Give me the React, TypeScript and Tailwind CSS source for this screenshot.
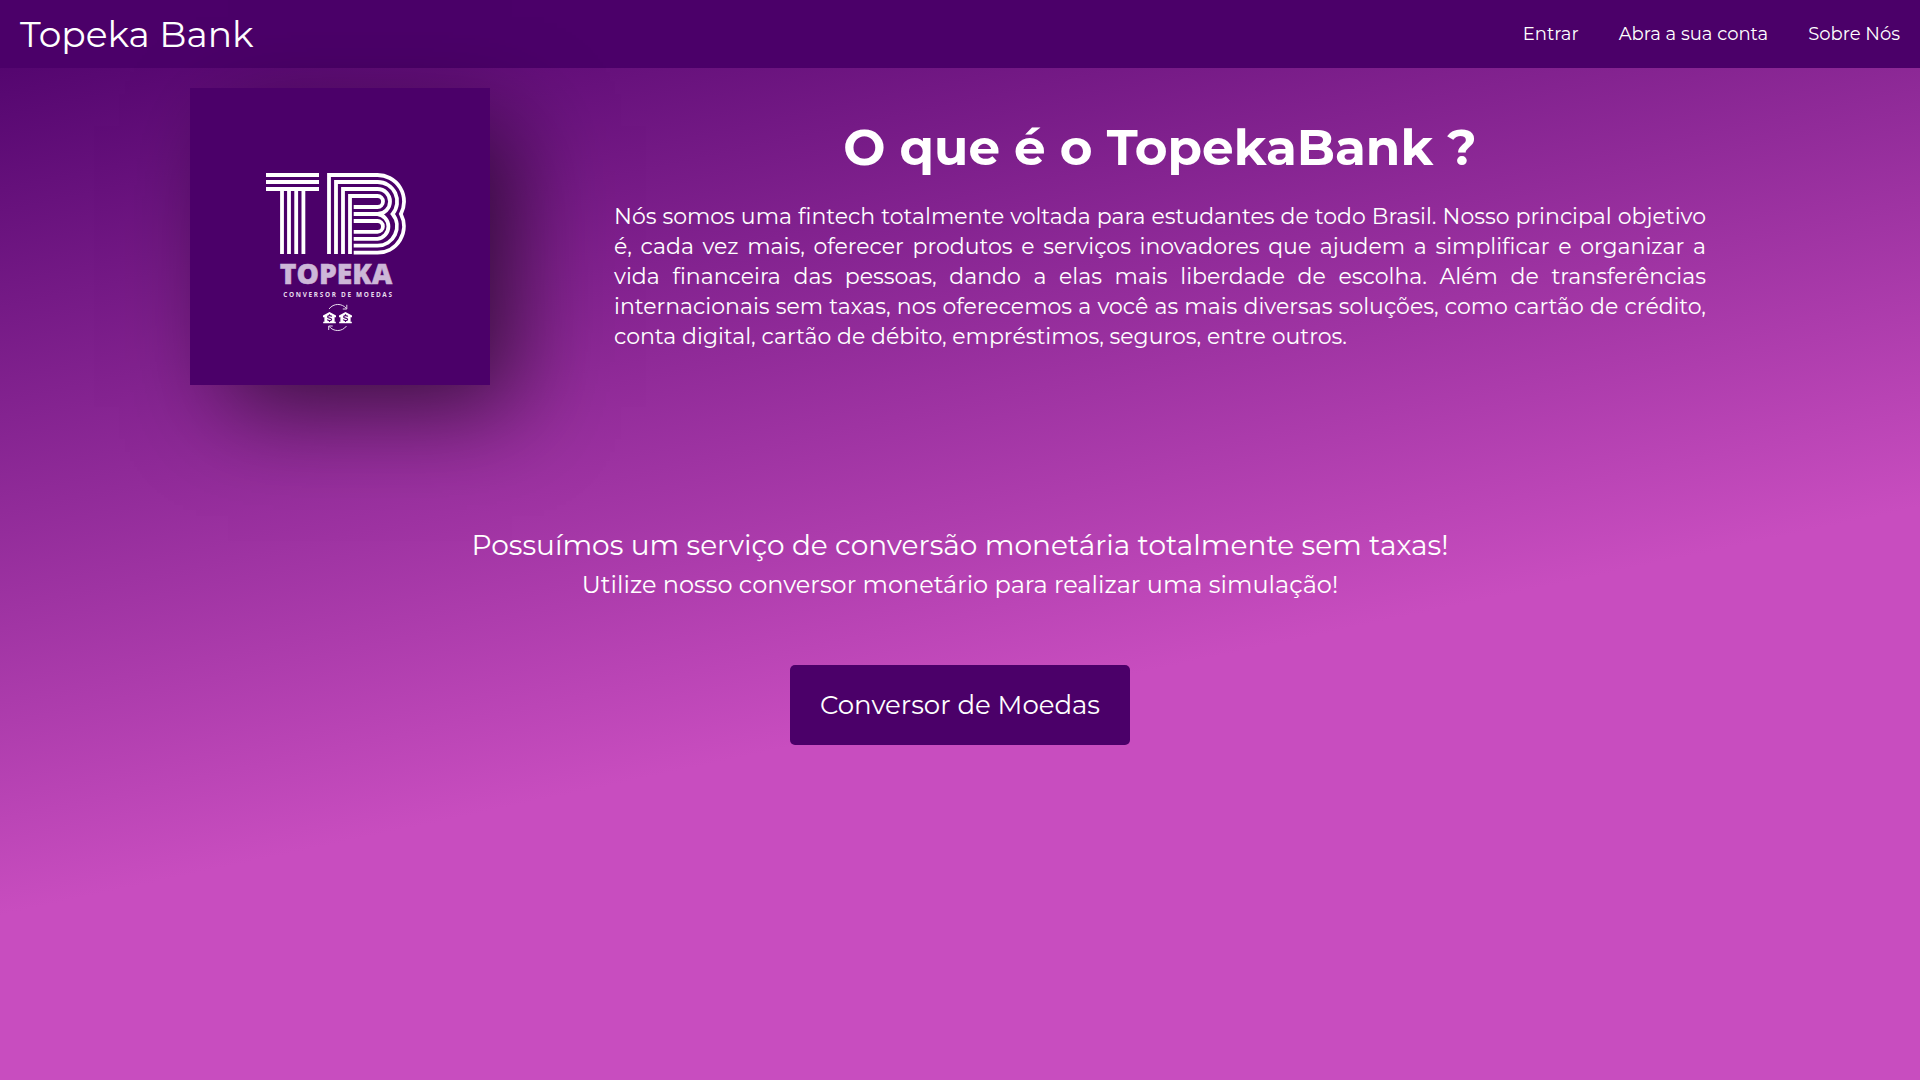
import React from "react";

function House({ x }: { x: number }) {
  return (
    <g transform={`translate(${x} 224)`}>
      <path d="M6.5 0 13 3.4V5.2H11.6V9.8H12.8V11.2H.2V9.8H1.4V5.2H0V3.4Z" fill="#fff" />
      <path d="M8.7 4.6C8.3 3.2 4.6 3.1 4.6 4.9 4.6 6.6 8.6 5.6 8.6 7.4 8.6 9 4.9 9 4.3 7.5M6.5 2.2V3.6M6.5 8.6V9.9" fill="none" stroke="#4b0069" strokeWidth="1.2" />
    </g>
  );
}

function Logo() {
  return (
    <svg viewBox="0 0 300 297" className="h-full w-full" role="img" aria-label="Topeka">
      <g fill="none" stroke="#fff" strokeWidth="3.8">
        <path d="M76 87H129M76 94H129M76 101H129" />
        <path d="M92 101V166M99 101V166M106.2 101V166M113.4 101V166" />
        <path d="M139 166V87H187.5A26.5 26.5 0 0 1 210.9 126A26.5 26.5 0 0 1 187.5 164.7H163.7" />
        <path d="M146 166V94H187.5A19.5 19.5 0 0 1 202.6 126A19.5 19.5 0 0 1 187.5 157.7H163.7" />
        <path d="M153 166V101H187.5A12.5 12.5 0 0 1 187.5 126A12.5 12.5 0 0 1 187.5 150.8H163.7M163.7 126H190" />
        <path d="M160 166V108H187.5A5.5 5.5 0 0 1 187.5 119H163.7M163.7 133H187.5A5.4 5.4 0 0 1 187.5 143.8H163.7" />
      </g>
      <text x="89.8" y="195.6" textLength="112.4" lengthAdjust="spacingAndGlyphs" fill="#cdb7d8" stroke="#cdb7d8" strokeWidth="0.5" className="font-['Open_Sans'] text-[28.6px] font-extrabold">TOPEKA</text>
      <text x="93.2" y="208.7" textLength="108.8" fill="#e6dcec" className="font-['Open_Sans'] text-[6.4px] font-bold">CONVERSOR DE MOEDAS</text>
      <House x={133} />
      <House x={149} />
      <g fill="none" stroke="#e6dcec" strokeWidth="1">
        <path d="M139 221C143.5 215 152 215 156.5 220.6M156.8 216.8V221H152.8" />
        <path d="M156.5 238C152 244 143.5 244 139 238.3M138.7 242V238H142.7" />
      </g>
    </svg>
  );
}

export default function App() {
  return (
    <div className="min-h-screen bg-[linear-gradient(168deg,#4b0069_0%,#c84dbf_61.5%)] font-[Montserrat,Inter,sans-serif] text-white">
      <nav className="flex h-[68px] items-center justify-between bg-[#4b0069] px-5">
        <span className="text-[36px]">Topeka Bank</span>
        <ul className="flex gap-10 text-[18px]">
          <li>Entrar</li>
          <li>Abra a sua conta</li>
          <li>Sobre Nós</li>
        </ul>
      </nav>
      <main>
        <section className="flex pt-5 pl-[190px]">
          <div className="h-[297px] w-[300px] shrink-0 bg-[#4b0069] shadow-[30px_30px_90px_-8px_rgba(0,0,0,0.58)]">
            <Logo />
          </div>
          <div className="ml-[124px] w-[1092px] pt-[29px]">
            <h1 className="text-center text-[50px] leading-[62px] font-bold">O que é o TopekaBank ?</h1>
            <p className="mt-[23px] text-justify text-[22px] leading-[30px]">
              Nós somos uma fintech totalmente voltada para estudantes de todo Brasil. Nosso principal objetivo é, cada vez mais, oferecer produtos e serviços inovadores que ajudem a simplificar e organizar a vida financeira das pessoas, dando a elas mais liberdade de escolha. Além de transferências internacionais sem taxas, nos oferecemos a você as mais diversas soluções, como cartão de crédito, conta digital, cartão de débito, empréstimos, seguros, entre outros.
            </p>
          </div>
        </section>
        <section className="mt-[142px] flex flex-col items-center">
          <h2 className="text-[28px] leading-[36px]">Possuímos um serviço de conversão monetária totalmente sem taxas!</h2>
          <h3 className="mt-1 text-[24px] leading-[36px]">Utilize nosso conversor monetário para realizar uma simulação!</h3>
          <button className="mt-[62px] h-20 w-[340px] rounded-[5px] bg-[#4b0069] text-[26px]">Conversor de Moedas</button>
        </section>
      </main>
    </div>
  );
}
